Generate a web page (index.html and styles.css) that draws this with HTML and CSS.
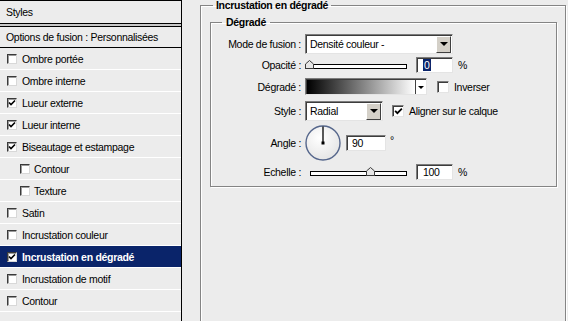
FILE: index.html
```html
<!DOCTYPE html>
<html>
<head>
    <title>Style de calque</title>
    <link rel="stylesheet" href="styles.css">
</head>
<body>

<div class="dialog">
    <!-- Left list of layer effects -->
    <aside class="styles-panel">
        <div class="panel-title">Styles</div>
        <div class="panel-sep"></div>
        <div class="panel-options">Options de fusion : Personnalisées</div>
        <ul class="fx-list">
            <li class="fx"><span class="cb"></span>Ombre portée</li>
            <li class="fx"><span class="cb"></span>Ombre interne</li>
            <li class="fx"><span class="cb"><svg viewBox="0 0 8 8"><path d="M1 3.5 L3 5.5 L7 1.5"/></svg></span>Lueur externe</li>
            <li class="fx"><span class="cb"><svg viewBox="0 0 8 8"><path d="M1 3.5 L3 5.5 L7 1.5"/></svg></span>Lueur interne</li>
            <li class="fx"><span class="cb"><svg viewBox="0 0 8 8"><path d="M1 3.5 L3 5.5 L7 1.5"/></svg></span>Biseautage et estampage</li>
            <li class="fx sub"><span class="cb"></span>Contour</li>
            <li class="fx sub"><span class="cb"></span>Texture</li>
            <li class="fx"><span class="cb"></span>Satin</li>
            <li class="fx"><span class="cb"></span>Incrustation couleur</li>
            <li class="fx active"><span class="cb"><svg viewBox="0 0 8 8"><path d="M1 3.5 L3 5.5 L7 1.5"/></svg></span>Incrustation en dégradé</li>
            <li class="fx"><span class="cb"></span>Incrustation de motif</li>
            <li class="fx"><span class="cb"></span>Contour</li>
            <li class="fx"></li>
        </ul>
    </aside>

    <!-- Effect settings -->
    <main class="settings">
        <fieldset class="group outer">
            <legend>Incrustation en dégradé</legend>
            <fieldset class="group inner">
                <legend>Dégradé</legend>
                <div class="form">
                    <label>Mode de fusion :</label>
                    <div class="ctl">
                        <div class="select wide"><span class="select-text">Densité couleur -</span><span class="drop"><i class="tri"></i></span></div>
                    </div>

                    <label>Opacité :</label>
                    <div class="ctl">
                        <div class="slider"><svg class="thumb" style="left:-1px" viewBox="0 0 9 9"><polygon points="0.5,8.5 0.5,4 4.5,0.5 8.5,4 8.5,8.5"/></svg></div>
                        <div class="field"><span class="sel">0</span></div>
                        <span class="unit">%</span>
                    </div>

                    <label>Dégradé :</label>
                    <div class="ctl">
                        <div class="grad-picker"><span class="grad"></span><span class="mini-drop"><i class="tri small"></i></span></div>
                        <span class="check gap-inv"></span>
                        <span class="check-label">Inverser</span>
                    </div>

                    <label>Style :</label>
                    <div class="ctl">
                        <div class="select narrow"><span class="select-text">Radial</span><span class="drop"><i class="tri"></i></span></div>
                        <span class="check gap-align"><svg viewBox="0 0 8 8"><path d="M1 3.5 L3 5.5 L7 1.5"/></svg></span>
                        <span class="check-label">Aligner sur le calque</span>
                    </div>

                    <label>Angle :</label>
                    <div class="ctl">
                        <svg class="dial" width="36" height="36" viewBox="0 0 36 36">
                            <defs>
                                <radialGradient id="dialFill" cx="0.4" cy="0.35" r="0.7">
                                    <stop offset="0" stop-color="#ffffff"/>
                                    <stop offset="1" stop-color="#e4e4e4"/>
                                </radialGradient>
                            </defs>
                            <circle cx="18" cy="18" r="17" fill="url(#dialFill)" stroke="#56678c" stroke-width="1.4"/>
                            <line x1="18" y1="18" x2="18" y2="1.5" stroke="#000" stroke-width="1.3"/>
                            <rect x="16.5" y="16.5" width="3" height="3" fill="#000"/>
                        </svg>
                        <div class="field angle">90</div>
                        <span class="deg">°</span>
                    </div>

                    <label>Echelle :</label>
                    <div class="ctl">
                        <div class="slider scale"><svg class="thumb" style="left:55px" viewBox="0 0 9 9"><polygon points="0.5,8.5 0.5,4 4.5,0.5 8.5,4 8.5,8.5"/></svg></div>
                        <div class="field">100</div>
                        <span class="unit">%</span>
                    </div>
                </div>
            </fieldset>
        </fieldset>
    </main>
</div>

</body>
</html>
```
FILE: styles.css
```css
/* Base */
body {
    margin: 0;
    background: #ececec;
    font-family: "Liberation Sans", Arial, sans-serif;
    font-size: 10.5px;
    letter-spacing: -0.3px;
    color: #000;
    overflow: hidden;
}

.dialog {
    display: flex;
    height: 321px;
}

/* Left effects panel */
.styles-panel {
    width: 182px;
    flex: none;
    box-sizing: border-box;
    border-top: 1px solid #000;
    border-right: 1px solid #000;
}

.panel-title {
    height: 22px;
    line-height: 22px;
    padding-left: 6px;
    border-bottom: 1px solid #000;
}

.panel-sep {
    height: 2px;
    background: #c8c8c8;
    border-bottom: 1px solid #000;
}

.panel-options {
    height: 20px;
    line-height: 20px;
    padding-left: 6px;
    border-bottom: 1px solid #000;
}

.fx-list {
    list-style: none;
    margin: 0;
    padding: 0;
}

.fx {
    height: 21px;
    border-bottom: 1px solid #fff;
    display: flex;
    align-items: center;
    gap: 5px;
    padding-left: 7px;
    white-space: nowrap;
}

.fx.sub {
    padding-left: 20px;
    gap: 4px;
}

.fx.active {
    background: #0a246a;
    color: #fff;
    font-weight: bold;
}

/* Small checkbox in the list */
.cb {
    width: 10px;
    height: 10px;
    box-sizing: border-box;
    flex: none;
    background: #fff;
    border: 1px solid;
    border-color: #3a3a3a #d8d8d8 #d8d8d8 #3a3a3a;
    box-shadow: inset 1px 1px 0 #9a9a9a;
    display: flex;
}

.cb svg,
.check svg {
    width: 100%;
    height: 100%;
    fill: none;
    stroke: #000;
    stroke-width: 1.6;
}

/* Group boxes */
.settings {
    flex: none;
    padding-left: 18px;
}

.group {
    margin: 0;
    box-sizing: border-box;
    border: 1px solid #848484;
    box-shadow: 1px 1px 0 #fff, inset 1px 1px 0 #fff;
}

.group legend {
    font-weight: bold;
    padding: 0 3px;
}

.outer {
    width: 366px;
    height: 340px;
    padding: 5px 8px 0 12px;
}

.outer > legend {
    line-height: 11px;
}

.inner {
    width: 347px;
    margin-left: -3px;
    padding: 4px 0 5px 11px;
}

.inner > legend {
    line-height: 13px;
    padding: 0 4px;
}

/* Form grid */
.form {
    display: grid;
    grid-template-columns: 79px auto;
    grid-template-rows: 21px 21px 23px 25px 40px 18px;
    column-gap: 4px;
    align-items: center;
}

.form label {
    text-align: right;
    white-space: nowrap;
}

.ctl {
    display: flex;
    align-items: center;
}

/* Sunken boxes */
.select,
.field,
.grad-picker {
    box-sizing: border-box;
    background: #fff;
    border: 1px solid;
    border-color: #7c7c7c #e4e4e4 #e4e4e4 #7c7c7c;
    box-shadow: inset 1px 1px 0 #3c3c3c;
}

.select {
    height: 20px;
    display: flex;
    align-items: stretch;
    padding: 1px 1px 0 1px;
}

.select.wide {
    width: 148px;
}

.select.narrow {
    width: 78px;
}

.select-text {
    flex: 1;
    padding-left: 3px;
    line-height: 17px;
    white-space: nowrap;
}

.drop {
    width: 15px;
    background: #d4d0c8;
    border: 1px solid;
    border-color: #fff #404040 #404040 #fff;
    box-sizing: border-box;
    display: flex;
    align-items: center;
    justify-content: center;
}

.tri {
    width: 0;
    height: 0;
    border-left: 4px solid transparent;
    border-right: 4px solid transparent;
    border-top: 4px solid #000;
}

.tri.small {
    border-left-width: 3px;
    border-right-width: 3px;
    border-top-width: 3px;
}

.field {
    width: 37px;
    height: 16px;
    line-height: 14px;
    padding-left: 6px;
    margin-left: 9px;
}

.field.angle {
    width: 40px;
    margin-left: 5px;
    padding-left: 5px;
}

.sel {
    background: #0a246a;
    color: #fff;
    padding: 0 1px;
}

.unit {
    margin-left: 5px;
}

.deg {
    margin-left: 4px;
    align-self: flex-start;
    margin-top: 9px;
}

/* Sliders */
.slider {
    position: relative;
    width: 102px;
    height: 5px;
    box-sizing: border-box;
    border: 1px solid #000;
    background: #fff;
    margin-top: 3px;
}

.slider.scale {
    width: 97px;
    margin-left: 5px;
}

.thumb {
    position: absolute;
    top: -5px;
    width: 9px;
    height: 9px;
    fill: #e6e6e6;
    stroke: #3a3a3a;
    stroke-width: 1;
}

/* Gradient picker */
.grad-picker {
    width: 122px;
    height: 17px;
    display: flex;
    padding: 1px 0 0 1px;
}

.grad {
    flex: 1;
    background: linear-gradient(to right, #000, #fff);
}

.mini-drop {
    width: 10px;
    border-left: 1px solid #404040;
    display: flex;
    align-items: center;
    justify-content: center;
}

/* Right-side checkboxes */
.check {
    width: 12px;
    height: 12px;
    box-sizing: border-box;
    background: #fff;
    border: 1px solid;
    border-color: #7c7c7c #e4e4e4 #e4e4e4 #7c7c7c;
    box-shadow: inset 1px 1px 0 #3c3c3c;
    display: flex;
    padding: 1px 0 0 1px;
}

.gap-inv {
    margin-left: 10px;
}

.gap-align {
    margin-left: 9px;
}

.check-label {
    margin-left: 5px;
    white-space: nowrap;
}

.dial {
    flex: none;
}
```
